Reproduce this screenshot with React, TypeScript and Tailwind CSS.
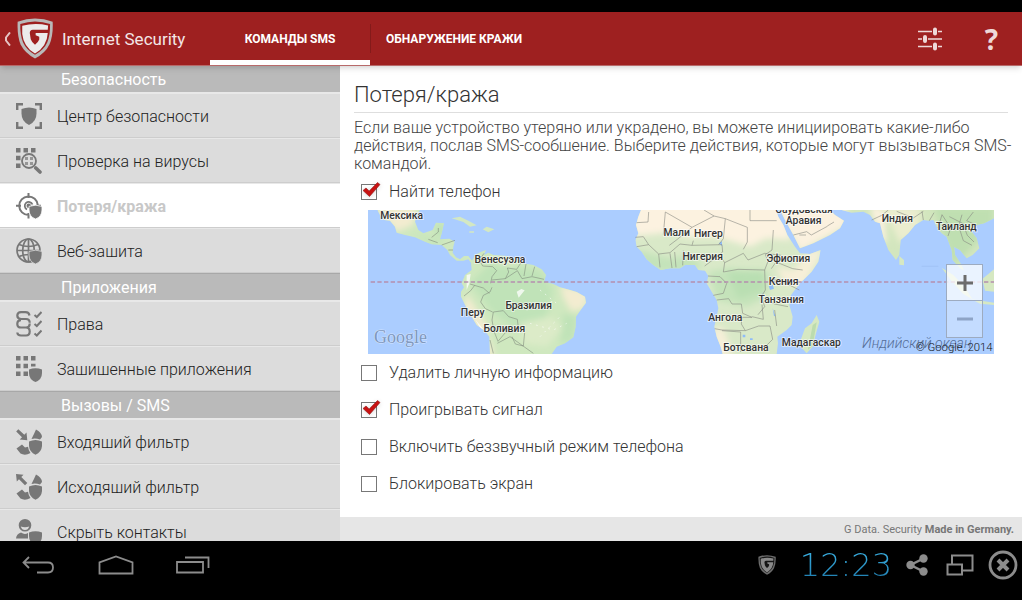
import React, { useState } from 'react';

type IconProps = { className?: string };

const SMALL_SHIELD = 'M13 13.4 Q19.5 11 26 13.4 V17 Q26 23.5 19.5 26 Q13 23.5 13 17 Z';

const GLogo: React.FC<{ className?: string; rim: string; back: string; letter: string }> = ({ className, rim, back, letter }) => (
  <svg viewBox="51 56 110 124" className={className} aria-hidden="true">
    <path fill={rim} d="M53 67 Q80 57 106 57 Q134 57 160 67 Q162 110 150 136 Q138 162 106 179 Q75 162 62 136 Q51 110 53 67Z" />
    <path fill={back} d="M61 74 Q84 66 106 66 Q130 66 152 74 Q153 108 143 131 Q133 153 106 168 Q80 153 70 131 Q60 108 61 74Z" />
    <path fill={letter} d="M67 79 Q106 69 146 78 L145 91 H99 Q90 92 90 101 L93 120 Q97 131 106 137 Q115 131 119 121 V113 L108 108 V101 H145 Q143 142 106 164 Q71 143 67 104 Z" />
  </svg>
);

const SecurityCenterIcon = () => (
  <>
    <path fill="none" stroke="currentColor" strokeWidth="2.4" d="M1.2 7V1.2H7M19 1.2h5.8V7M24.8 19v5.8H19M7 24.8H1.2V19" />
    <path d="M5.5 6 Q13 3 20.5 6 V10.5 Q20.5 18.5 13 22 Q5.5 18.5 5.5 10.5Z" />
  </>
);

const VirusScanIcon = () => (
  <>
    <path d="M0 0h4.500v4.500H0zM7.500 0H12v4.500H7.500zM15 0h4.500v4.500H15zM0 7.700h4.500v4.500H0zM0 15.400h4.500v4.500H0z" />
    <circle cx="13" cy="13" r="7" fill="none" stroke="currentColor" strokeWidth="1.8" />
    <path d="M9 9h3v3H9zM14 9h3v3h-3zM9 14h3v3H9zM14 14h3v3h-3z" opacity=".7" />
    <path stroke="currentColor" strokeWidth="3.6" strokeLinecap="round" d="M19.8 20l4.2 4" />
  </>
);

const TheftIcon = () => (
  <>
    <g fill="none" stroke="currentColor" strokeWidth="2">
      <path d="M12.5 22a9.3 9.3 0 1 1 9.3-10M12.5 0v5M0 12.7h5M20 12.7h5M12.5 20v5.5" />
      <path d="M11 16.500a4 4 0 1 1 5.500-5" strokeWidth="1.8" />
    </g>
    <circle cx="12.7" cy="12.7" r="2.2" />
    <path stroke="#fff" strokeWidth=".8" d={SMALL_SHIELD} />
  </>
);

const WebIcon = () => (
  <>
    <g fill="none" stroke="currentColor" strokeWidth="1.7">
      <circle cx="12.5" cy="12.5" r="11.5" />
      <ellipse cx="12.5" cy="12.5" rx="5.8" ry="11.5" />
      <path d="M12.5 1v23M1 12.5h23M3 6.5q9.5 4 19 0M3 18.5q9.5-4 19 0" />
    </g>
    <path stroke="#dcdcdc" strokeWidth=".8" d={SMALL_SHIELD} />
  </>
);

const RightsIcon = () => (
  <g fill="none" stroke="currentColor">
    <path strokeWidth="2.2" d="M13.5 4.500q-.5-3.300-4-3.300H5q-3.700 0-3.700 3.300T5 8h5q3.700 0 3.700 3.700M13.700 12.500q0 4-3.700 4H5q-3.700 0-3.700-3.600T5 9.200M10 16.500q3.700 0 3.700 4t-3.700 4H5q-3.500 0-3.700-3" />
    <path strokeWidth="2" d="M18.5 4l2.3 2L25.5 1M18.5 13l2.3 2 4.700-5M18.5 22.5l2.3 2 4.700-5" />
  </g>
);

const ProtectedAppsIcon = () => (
  <>
    <path d="M0 0h4.500v4.500H0zM7.500 0H12v4.500H7.500zM15 0h4.500v4.500H15zM0 7.700h4.500v4.500H0zM7.500 7.700H12v4.500H7.500zM15 7.700h4.500v2.800H15zM0 15.400h4.500v4.500H0zM7.500 15.400H12v4.500H7.500z" />
    <path d={SMALL_SHIELD} />
  </>
);

const Handset = () => (
  <>
    <path d="M20 .5 Q25.5 3 26 8 L24 10.5 Q19.5 9 15.5 10 Q18.5 4 20 .5Z" />
    <path d="M.5 19.5 L6 15.5 L9 18.5 L12 17.8 Q12.5 22 14.5 24 Q9 27 4.5 24.5 Z" />
    <path d="M13 12.5 Q19.5 9.5 26 12.5 V17 Q25.5 23 19.5 25.8 Q13.5 23 13 17Z" />
  </>
);

const IncomingIcon = () => (
  <>
    <path d="M2.300 .3 L8.300 5.800 L10.500 3.600 L11.300 11.200 L3.700 10.400 L6 8.200 L.2 2.500Z" />
    <Handset />
  </>
);

const OutgoingIcon = () => (
  <>
    <path d="M0 0 L7.500 .8 L5.300 3 L11.300 9 L9 11.300 L3 5.300 L.8 7.500Z" />
    <Handset />
  </>
);

const ContactsIcon = () => (
  <>
    <path fillRule="evenodd" d="M9 0a6.300 6.300 0 1 1 0 12.600A6.300 6.300 0 0 1 9 0zM4.800 7.500q4.200 1.500 8.400 0q-1 3.500-4.200 3.500t-4.200-3.500z" />
    <path d="M0 19.500q.3-4.500 5-6 3.500 2.500 7 .5v5.500z" />
    <path d={SMALL_SHIELD} />
  </>
);

const menu = [
  {
    title: 'Безопасность',
    items: [
      { label: 'Центр безопасности', icon: SecurityCenterIcon },
      { label: 'Проверка на вирусы', icon: VirusScanIcon },
      { label: 'Потеря/кража', icon: TheftIcon },
      { label: 'Веб-зашита', icon: WebIcon },
    ],
  },
  {
    title: 'Приложения',
    items: [
      { label: 'Права', icon: RightsIcon },
      { label: 'Зашишенные приложения', icon: ProtectedAppsIcon },
    ],
  },
  {
    title: 'Вызовы / SMS',
    items: [
      { label: 'Входяший фильтр', icon: IncomingIcon },
      { label: 'Исходяший фильтр', icon: OutgoingIcon },
      { label: 'Скрыть контакты', icon: ContactsIcon },
    ],
  },
];

const actions = [
  { id: 'wipe', label: 'Удалить личную информацию' },
  { id: 'signal', label: 'Проигрывать сигнал' },
  { id: 'mute', label: 'Включить беззвучный режим телефона' },
  { id: 'lock', label: 'Блокировать экран' },
];

// x is the centre of the label, y its baseline
const mapLabels = [
  { x: 101, y: 27, text: 'Мексика' },
  { x: 396, y: 159, text: 'Венесуэла' },
  { x: 482, y: 297, text: 'Бразилия' },
  { x: 314, y: 317, text: 'Перу' },
  { x: 409, y: 366, text: 'Боливия' },
  { x: 926, y: 79, text: 'Мали' },
  { x: 1021, y: 81, text: 'Нигер' },
  { x: 1004, y: 150, text: 'Нигерия' },
  { x: 1072, y: 332, text: 'Ангола' },
  { x: 1134, y: 423, text: 'Ботсвана' },
  { x: 1308, y: 8, text: 'Саудовская' },
  { x: 1307, y: 41, text: 'Аравия' },
  { x: 1261, y: 156, text: 'Эфиопия' },
  { x: 1247, y: 226, text: 'Кения' },
  { x: 1240, y: 280, text: 'Танзания' },
  { x: 1330, y: 407, text: 'Мадагаскар' },
  { x: 1588, y: 35, text: 'Индия' },
  { x: 1765, y: 61, text: 'Таиланд' },
];

const WorldMap: React.FC<IconProps> = ({ className }) => (
  <svg viewBox="0 0 1878 432" preserveAspectRatio="xMidYMid slice" className={className} role="img" aria-label="Карта">
    <defs>
      <filter id="soft" x="-20%" y="-20%" width="140%" height="140%">
        <feGaussianBlur stdDeviation="9" />
      </filter>
      <clipPath id="america">
        <path d="M52 30 60 45 72 60 90 62 105 80 110 98 135 105 165 112 195 125 215 133 245 135 262 150 270 165 290 182 310 182 325 178 333 188 335 210 315 225 305 250 312 262 303 275 303 290 318 320 335 350 350 375 375 393 388 410 390 462 575 462 590 440 615 430 640 412 647 380 648 350 662 330 678 308 675 290 650 276 630 270 600 262 580 252 552 245 558 225 545 208 520 195 490 190 470 178 440 168 400 165 385 158 372 165 378 150 362 156 345 165 336 182 325 168 312 168 300 178 288 172 278 158 280 140 284 125 268 116 240 118 245 100 252 70 228 68 218 90 190 100 175 90 165 65 170 45 180 30Z" />
      </clipPath>
      <clipPath id="africa">
        <path d="M213 30 205 50 198 75 205 100 196 120 200 140 215 155 230 178 250 195 272 210 300 205 330 205 345 195 375 195 385 210 405 212 415 228 410 250 425 275 440 300 445 325 440 350 433 380 440 410 452 440 458 462 620 462 624 430 622 410 650 390 665 375 668 350 658 315 663 285 690 250 725 215 745 185 752 150 720 162 690 160 675 140 652 105 640 75 625 50 618 30Z" />
      </clipPath>
      <clipPath id="asia">
        <path d="M0 30 15 60 40 105 60 145 100 130 150 105 180 85 192 62 165 45 150 30ZM185 30 215 38 250 35 270 45 285 65 300 70 310 110 325 150 348 180 358 165 362 120 385 100 405 75 430 60 445 62 460 60 472 85 485 100 500 110 515 150 518 180 540 205 552 212 545 195 525 165 522 140 540 150 560 175 578 165 598 145 590 115 575 95 590 75 612 70 642 55 642 30Z" />
      </clipPath>
    </defs>
    <rect width="1878" height="432" fill="#abcdff" />

    <g transform="translate(-24 -30)">
      <path fill="#d3e8c3" d="M275 55 300 50 325 62 350 76 330 80 310 66ZM368 88 380 80 403 88 385 97ZM328 94h14v4h-14z" />
      <g clipPath="url(#america)">
        <rect x="24" y="30" width="680" height="440" fill="#cfe8bf" />
        <g filter="url(#soft)">
          <path fill="#f3ecd0" d="M40 20h130l-10 55-50 20zM385 400l20 70h-30zM600 255l90 20-15 50-40 10-25-40zM320 280l70 110-20 20-60-80z" />
          <path fill="#c0e3b8" d="M330 250l60-60 150 20 40 60-20 80-90 40-70-50zM225 70h30v40h-30zM150 95l90 30-10 15zM610 340l40 10-10 70-40 15z" />
          <path fill="#dcebc8" d="M480 370l90-20 40 30-50 60-70-10zM400 165l70 15-10 20-60-10z" />
        </g>
        <path fill="#fff" opacity=".75" d="M320 225l12-3-4 28-8 20zM470 275l14-8 10 4-18 22zM345 358l25 30-6 2z" />
        <path fill="none" stroke="#fff" strokeWidth="3" strokeDasharray="5 14" opacity=".6" d="M500 330l90-30M510 370l70 20 40-20M540 410l60-60M540 270l50 40" />
      </g>
      <path
        fill="none"
        stroke="#7f8a7c"
        strokeWidth="2.5"
        opacity=".7"
        d="M215 112l20-16V84M205 118l28 10M245 135l40-14M265 150h14M372 160l-14 20 10 18 30 2 12 12-14 18-4 20M396 240l40-4 10-20-4-12 28 4 18-28M436 236l36-24 14 24 30-6 36 8M498 192l-6 36M524 200l-8 28M330 252l40 12 18 16M312 288l20-16 12-16M396 262l-6 14-20 10-8 20 14 20 22 10M400 336l30-4 16 18 26 8 4 34-40 6-22 26-12-30-6-34zM390 420l10 40M412 430l38-20 70 50M456 410l10 22 24 6 4-40"
      />
    </g>

    <g transform="translate(606 -30)">
      <g clipPath="url(#africa)">
        <rect x="190" y="30" width="570" height="440" fill="#d9e9c8" />
        <g filter="url(#soft)">
          <path fill="#fcf2e0" d="M180 10h480v110l-70-5-50 25-100-30-80 2-60-15-110 12z" />
          <path fill="#c4e3ba" d="M200 150l100 25 60-10 40 35-60 20-130-10zM415 215l60-10 120 10-5 75-60 30-90-20z" />
          <path fill="#b9dfb2" d="M470 215l110-5 5 60-80 25z" />
          <path fill="#f6efd8" d="M430 380l30 5 30 80-60 10zM620 200l50 10 50-60 40 0-60 110-60-10z" />
        </g>
        <path fill="#8fbcf8" d="M446 130l10-6v14zM596 258l12-4 4 12-12 4zM608 325l8 22-4 2zM576 275l4 22h-5zM518 404h8v8h-8zM540 415h8v5h-8z" />
      </g>
      <path
        fill="none"
        stroke="#85877f"
        strokeWidth="2.5"
        opacity=".7"
        d="M200 68l34-2 2-30M286 36l-6 68M286 36l80 46-44 36-24 18M366 82l66-34-30-18M432 48l34 8 66 26v44l-12 22M466 56l-6 60-14 18M540 30v32h80M200 140l36-6-16-24-24 2M236 134l30 28 34-4 30-26 36 4 4-14M300 160l6 44M266 162l4 40M314 156l4 46M340 152l-2 44M366 136l90-2 2 22-30 24-24 18M452 170l12 18 56-28 14 20 50-20 50 6M464 188l-4 28 44-8 80 2 10-26-8-20M414 228l36 2 20 20-10 30-30 6M440 300l36-4 10 16h28l4 28 28 12h-30l-2 20 12 20-70-2-22-4M584 210l2 60-12 20 10 30-20 24M546 350l34 8-4-44M526 392l40-14h34l8 40-30 30M456 392l56 4v60M612 238l40 14 36 18M590 300l24 12 40 8M586 164l20-14 4-60M604 206l14-20 50 20 30 4M614 330l6 48"
      />
    </g>

    <g transform="translate(1236 -30)">
      <g clipPath="url(#asia)">
        <rect y="30" width="645" height="190" fill="#d3e6be" />
        <g filter="url(#soft)">
          <path fill="#fbf1df" d="M0 20h200v60L60 155 0 60zM270 20h40l10 110-20-10z" />
          <path fill="#ebedcf" d="M290 20h130v70l-60 40-30-60z" />
          <path fill="#bfdfb1" d="M460 20h180v50l-60 70-60 60-30-90z" />
        </g>
      </g>
      <path
        fill="#d6e8c2"
        d="M358 168 372 180 372 196 358 194ZM110 345 118 365 108 400 98 440 80 460 66 445 62 420 75 385 95 370ZM485 203 520 225 555 262 577 298 550 282 512 240ZM575 298 642 308 642 315 600 311ZM607 237 642 208 642 275 615 272Z"
      />
      <path fill="#bcdcae" d="M98 375l12-8-12 70-14 12z" />
      <path
        fill="none"
        stroke="#85877f"
        strokeWidth="2.5"
        opacity=".7"
        d="M40 105l40-10 14 10 48-26M58 105h20M142 78l20-12M275 60l30-14 20-16M350 34l50 20 30-20M430 60l-4-26M448 62l14-24M474 84l12-40 26 40-8 24M512 84l24-6 14 44 26 14M508 50l40 20 14 36 20 20M536 78l10-34M580 36l-20 26 30 14"
      />
      <path stroke="#9dc0f2" strokeWidth="2" d="M425 199h50" />
    </g>

    <path stroke="#b58fae" strokeWidth="4" strokeDasharray="13 7" d="M8 216H1878" />

    <g fontFamily="Roboto, sans-serif" fontSize="31" fontWeight="500" fill="#333" stroke="#fff" strokeWidth="5" strokeOpacity=".7" paintOrder="stroke" textAnchor="middle">
      {mapLabels.map((l) => (
        <text key={l.text} x={l.x} y={l.y}>{l.text}</text>
      ))}
    </g>
    <text x="18" y="398" fontFamily="'Liberation Serif', serif" fontSize="54" fill="#8098bd" stroke="#d5e5ff" strokeWidth="3" paintOrder="stroke">Google</text>
    <text x="1482" y="415" fontFamily="Roboto, sans-serif" fontSize="42" fontStyle="italic" fill="#566f98">Индийский океан</text>
    <text x="1874" y="422" fontFamily="Roboto, sans-serif" fontSize="34" fill="#111" textAnchor="end">© Google, 2014</text>
  </svg>
);

const CheckRow: React.FC<{ id: string; label: string; checked: boolean; onChange: () => void }> = ({ id, label, checked, onChange }) => (
  <div className="flex h-[37px] items-center gap-3 pl-[7px]">
    <span className="relative flex h-4 w-4">
      <input
        id={id}
        type="checkbox"
        checked={checked}
        onChange={onChange}
        className="h-4 w-4 appearance-none border border-[#777] bg-white"
      />
      {checked && (
        <svg viewBox="0 0 20 18" className="pointer-events-none absolute -top-[3px] left-0 h-[18px] w-5 drop-shadow-sm" aria-hidden="true">
          <path fill="#c81212" stroke="#8d1a1a" strokeWidth=".6" d="M2 9.5 L5 7 L8.200 10 L16.500 1.500 L19 3.500 L8.500 15.500 Z" />
        </svg>
      )}
    </span>
    <label htmlFor={id} className="text-base text-[#333]">{label}</label>
  </div>
);

const App: React.FC = () => {
  const [active, setActive] = useState('Потеря/кража');
  const [tab, setTab] = useState(0);
  const [checked, setChecked] = useState<Record<string, boolean>>({ find: true, signal: true });

  const toggle = (id: string) => setChecked({ ...checked, [id]: !checked[id] });

  return (
    <div className="flex h-screen flex-col overflow-hidden bg-black pt-3 font-[Roboto,sans-serif]">
      {/* Action bar */}
      <header className="relative z-10 flex h-[54px] shrink-0 border-b border-[#b86a6a] bg-[#9e2020] text-white shadow-md">
        <button className="flex w-[210px] items-center pl-1" aria-label="Назад">
          <svg viewBox="0 0 7 14" className="h-[14px] w-[7px]" aria-hidden="true">
            <path fill="none" stroke="#e6c5c5" strokeWidth="2" d="M6 .5L2 5.500v3l4 5" />
          </svg>
          <GLogo className="ml-1.5 h-[41px] w-9" rim="#b9b9b9" back="#9e2020" letter="#ececec" />
          <span className="ml-[9px] pt-0.5 text-[17px] text-[#f3e6e6]">Internet Security</span>
        </button>
        <nav className="flex flex-1 text-xs font-bold">
          <button
            onClick={() => setTab(0)}
            className={`w-40 border-b-[5px] pt-[5px] ${tab === 0 ? 'border-white' : 'border-transparent'}`}
          >
            КОМАНДЫ SMS
          </button>
          <span className="my-3 w-px bg-[#841a1a]" />
          <button
            onClick={() => setTab(1)}
            className={`border-b-[5px] px-[15px] pt-[5px] ${tab === 1 ? 'border-white' : 'border-transparent'}`}
          >
            ОБНАРУЖЕНИЕ КРАЖИ
          </button>
        </nav>
        <div className="flex items-center gap-[43px] pr-6">
          <button aria-label="Настройки">
            <svg viewBox="0 0 24 24" className="h-6 w-6" aria-hidden="true">
              <g stroke="#eed8d8" fill="none">
                <path strokeWidth="1.6" d="M0 4.500h14M20 4.500h4M0 12h4M10 12h14M0 19.500h14M20 19.500h4" />
                <path strokeWidth="4" strokeLinecap="round" d="M17 2.500v4M7 10v4M17 17.500v4" />
              </g>
            </svg>
          </button>
          <button aria-label="Помощь" className="font-[Open_Sans,sans-serif] text-[28px] leading-8 font-bold text-[#eed8d8]">?</button>
        </div>
      </header>

      <div className="flex min-h-0 flex-1">
        {/* Sidebar */}
        <aside className="w-1/3 max-w-[340px] shrink-0 overflow-hidden bg-[#dcdcdc]">
          {menu.map((group, i) => (
            <section key={group.title}>
              <h2
                className={`flex items-center border-b border-[#e8e8e8] bg-[#bababa] pt-0.5 pl-[61px] text-base text-white ${
                  i === 0 ? 'h-[27px]' : 'h-7 border-t border-t-[#a8a8a8]'
                }`}
              >
                {group.title}
              </h2>
              {group.items.map(({ label, icon: Icon }) => (
                <button
                  key={label}
                  onClick={() => setActive(label)}
                  className={`flex h-[45px] w-full items-center gap-[15px] border-t border-b border-t-[#e8e8e8] border-b-[#cdcdcd] pl-4 text-left text-base ${
                    active === label ? 'bg-white font-bold text-[#c8c8c8]' : 'font-light text-[#222]'
                  }`}
                >
                  <svg viewBox="0 0 26 26" className="h-[26px] w-[26px] fill-current text-[#777]" aria-hidden="true">
                    <Icon />
                  </svg>
                  <span className="pt-0.5">{label}</span>
                </button>
              ))}
            </section>
          ))}
        </aside>

        {/* Content */}
        <div className="flex min-w-0 flex-1 flex-col bg-white">
          <main className="min-h-0 flex-1 overflow-hidden px-[14px] pt-4 font-light">
            <h1 className="border-b border-[#dedede] pb-1 text-[22px] leading-[26px] text-[#333]">Потеря/кража</h1>
            <p className="mt-1.5 -mr-3 text-base leading-[18px] text-[#444]">
              Если ваше устройство утеряно или украдено, вы можете инициировать какие-либо действия, послав SMS-сообшение. Выберите действия, которые могут вызываться SMS-командой.
            </p>
            <CheckRow id="find" label="Найти телефон" checked={!!checked.find} onChange={() => toggle('find')} />
            <div className="relative mx-[14px] h-36">
              <WorldMap className="h-full w-full" />
              <div className="absolute top-[54px] right-[11px] flex w-[37px] flex-col border border-[#9dabc0]">
                <button aria-label="Увеличить" className="flex h-9 items-center justify-center border-b border-[#9dabc0] bg-white/75">
                  <svg viewBox="0 0 16 16" className="h-4 w-4" aria-hidden="true"><path stroke="#6c6c6c" strokeWidth="3" d="M8 0v16M0 8h16" /></svg>
                </button>
                <button aria-label="Уменьшить" className="flex h-9 items-center justify-center bg-white/30">
                  <svg viewBox="0 0 16 16" className="h-4 w-4" aria-hidden="true"><path stroke="#8ea4c6" strokeWidth="3" d="M0 8h16" /></svg>
                </button>
              </div>
            </div>
            {actions.map((a) => (
              <CheckRow key={a.id} id={a.id} label={a.label} checked={!!checked[a.id]} onChange={() => toggle(a.id)} />
            ))}
          </main>
          <footer className="h-6 shrink-0 bg-[#e6e6e6] pt-px pr-2 text-right text-[11px] leading-6 text-[#777]">
            G Data. Security <b>Made in Germany.</b>
          </footer>
        </div>
      </div>

      {/* System bar */}
      <div className="flex h-[59px] shrink-0 items-start pt-2 text-[#8c8c8c]">
        <div className="flex h-8 flex-1 items-center gap-[42px] pl-[22px]">
          <button aria-label="Назад">
            <svg viewBox="0 0 34 18" className="h-[18px] w-[34px]" aria-hidden="true">
              <path fill="none" stroke="currentColor" strokeWidth="1.8" d="M7 1L1.500 6.500 7 12M1.500 6.500H26q5 0 5 5t-5 5H15" />
            </svg>
          </button>
          <button aria-label="Домой">
            <svg viewBox="0 0 36 20" className="h-5 w-9" aria-hidden="true">
              <path fill="none" stroke="currentColor" strokeWidth="1.8" d="M1.500 18.500V7.500L18 1.500l16.500 6v11z" />
            </svg>
          </button>
          <button aria-label="Недавние">
            <svg viewBox="0 0 34 18" className="h-[18px] w-[34px]" aria-hidden="true">
              <path fill="none" stroke="currentColor" strokeWidth="1.8" d="M1 6h26v10.500H1zM9 1.500h23.500V12" />
            </svg>
          </button>
        </div>
        <div className="flex h-8 items-center pr-1">
          <GLogo className="h-5 w-[18px]" rim="#6d6d6d" back="#161616" letter="#8a8a8a" />
          <time className="ml-6 bg-gradient-to-b from-[#3cb4e6] to-[#1f7cae] bg-clip-text font-[DejaVu_Sans,sans-serif] text-[32px] leading-8 font-extralight text-transparent">12:23</time>
          <button aria-label="Поделиться" className="ml-3.5">
            <svg viewBox="0 0 22 22" className="h-[22px] w-[22px] fill-current" aria-hidden="true">
              <circle cx="4.5" cy="11" r="4.2" /><circle cx="17.5" cy="4.5" r="4.2" /><circle cx="17.5" cy="17.5" r="4.2" />
              <path stroke="currentColor" strokeWidth="2.5" d="M17.5 4.500L4.500 11l13 6.500" fill="none" />
            </svg>
          </button>
          <button aria-label="Окна" className="ml-[18px]">
            <svg viewBox="0 0 28 22" className="h-[22px] w-7" aria-hidden="true">
              <path fill="none" stroke="currentColor" strokeWidth="2" d="M6 10V1.500h20.500v15H17M1.500 10.500H16v10H1.500z" />
            </svg>
          </button>
          <button aria-label="Закрыть" className="ml-3.5">
            <svg viewBox="0 0 30 30" className="h-[30px] w-[30px]" aria-hidden="true">
              <g fill="none" stroke="currentColor">
                <circle cx="15" cy="15" r="13" strokeWidth="2.8" />
                <path strokeWidth="4" d="M10 10l10 10M20 10L10 20" />
              </g>
            </svg>
          </button>
        </div>
      </div>
    </div>
  );
};

export default App;
